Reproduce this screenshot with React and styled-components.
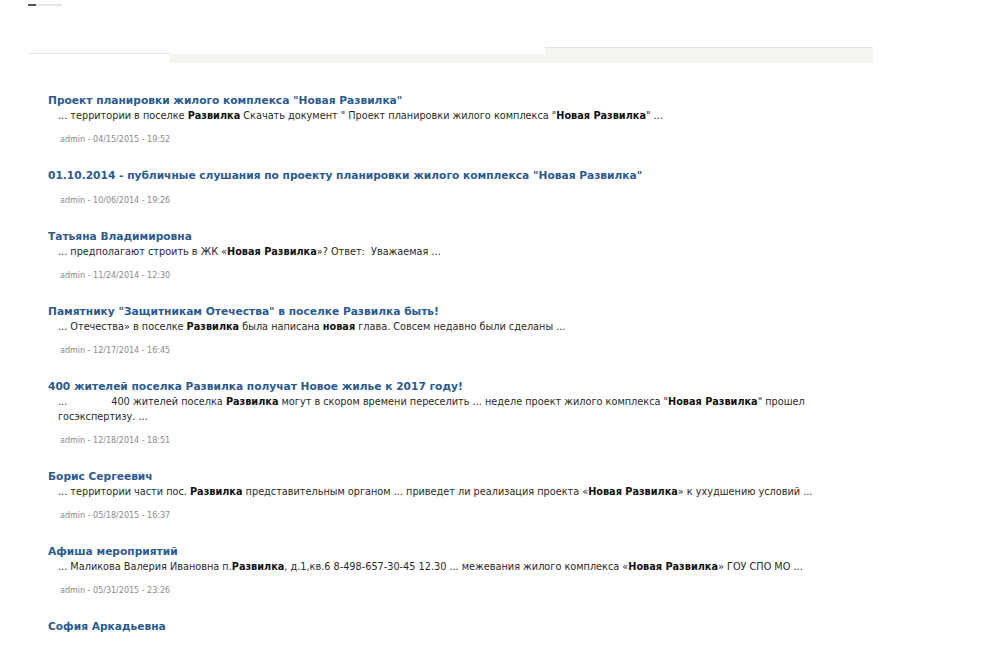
import { createGlobalStyle, styled } from "styled-components";

const Global = createGlobalStyle`
  html, body {
    margin: 0;
    padding: 0;
    background: #fff;
  }
  body {
    font-family: "DejaVu Sans", Verdana, sans-serif;
  }
`;

const Page = styled.div`
  width: 987px;
  height: 665px;
  overflow: hidden;
  background: #fff;
`;

const TopMark = styled.div`
  margin: 4px 0 0 28px;
  width: 34px;
  height: 2px;
  background: linear-gradient(to right, #555 0 8px, #e4e4e4 8px);
`;

const Header = styled.div`
  display: flex;
  align-items: flex-end;
  margin: 40px 0 0 28px;
  height: 17px;
`;

const HeaderLeft = styled.div`
  width: 142px;
  height: 9px;
  border-top: 1px solid #e8ebe4;
`;

const HeaderMid = styled.div`
  width: 375px;
  height: 9px;
  background: #f3f6ef;
`;

const HeaderRight = styled.div`
  width: 328px;
  height: 15px;
  background: #f3f6ef;
  border-top: 1px solid #dfe5da;
`;

const Results = styled.ol`
  list-style: none;
  margin: 31px 0 0 48px;
  padding: 0;
  width: 770px;
`;

const Item = styled.li`
  margin-bottom: 24px;
`;

const Title = styled.a`
  display: block;
  font-family: "DejaVu Sans", Verdana, sans-serif;
  font-size: 10.65px;
  font-weight: bold;
  color: #2c5a8e;
  text-decoration: none;
  line-height: 14px;
`;

const Snippet = styled.p`
  margin: 0 0 0 10px;
  font-family: "DejaVu Sans Condensed", Tahoma, sans-serif;
  font-size: 10.8px;
  line-height: 15px;
  color: #2a2a2a;

  b {
    color: #111;
  }
`;

const Lead = styled.span`
  padding-right: ${({ $gap }) => $gap}px;
`;

const Meta = styled.div`
  margin: ${({ $hasSnippet }) => ($hasSnippet ? "12px" : "13px")} 0 0 12px;
  font-family: "DejaVu Sans", Tahoma, sans-serif;
  font-size: 8px;
  color: #8a8a8a;
  line-height: 10px;
`;

const results = [
  {
    title: "Проект планировки жилого комплекса \"Новая Развилка\"",
    snippet: (
      <>
        ... территории в поселке <b>Развилка</b> Скачать документ " Проект планировки жилого комплекса "<b>Новая Развилка</b>" ...
      </>
    ),
    meta: "admin - 04/15/2015 - 19:52",
  },
  {
    title: "01.10.2014 - публичные слушания по проекту планировки жилого комплекса \"Новая Развилка\"",
    meta: "admin - 10/06/2014 - 19:26",
  },
  {
    title: "Татьяна Владимировна",
    snippet: (
      <>
        ... предполагают строить в ЖК «<b>Новая Развилка</b>»? Ответ:&nbsp; Уважаемая ...
      </>
    ),
    meta: "admin - 11/24/2014 - 12:30",
  },
  {
    title: "Памятнику \"Защитникам Отечества\" в поселке Развилка быть!",
    snippet: (
      <>
        ... Отечества» в поселке <b>Развилка</b> была написана <b>новая</b> глава. Совсем недавно были сделаны ...
      </>
    ),
    meta: "admin - 12/17/2014 - 16:45",
  },
  {
    title: "400 жителей поселка Развилка получат Новое жилье к 2017 году!",
    snippet: (
      <>
        <Lead $gap={44}>...</Lead>400 жителей поселка <b>Развилка</b> могут в скором времени переселить ... неделе проект жилого комплекса "<b>Новая Развилка</b>" прошел
        <br />
        госэкспертизу. ...
      </>
    ),
    meta: "admin - 12/18/2014 - 18:51",
  },
  {
    title: "Борис Сергеевич",
    snippet: (
      <>
        ... территории части пос. <b>Развилка</b> представительным органом ... приведет ли реализация проекта «<b>Новая Развилка</b>» к ухудшению условий ...
      </>
    ),
    meta: "admin - 05/18/2015 - 16:37",
  },
  {
    title: "Афиша мероприятий",
    snippet: (
      <>
        ... Маликова Валерия Ивановна п.<b>Развилка</b>, д.1,кв.6 8-498-657-30-45 12.30 ... межевания жилого комплекса «<b>Новая Развилка</b>» ГОУ СПО МО ...
      </>
    ),
    meta: "admin - 05/31/2015 - 23:26",
  },
  {
    title: "София Аркадьевна",
  },
];

export default function App() {
  return (
    <Page>
      <Global />
      <TopMark />
      <Header>
        <HeaderLeft />
        <HeaderMid />
        <HeaderRight />
      </Header>
      <Results>
        {results.map((r) => (
          <Item key={r.title}>
            <Title href="#">{r.title}</Title>
            {r.snippet && <Snippet>{r.snippet}</Snippet>}
            {r.meta && <Meta $hasSnippet={!!r.snippet}>{r.meta}</Meta>}
          </Item>
        ))}
      </Results>
    </Page>
  );
}
